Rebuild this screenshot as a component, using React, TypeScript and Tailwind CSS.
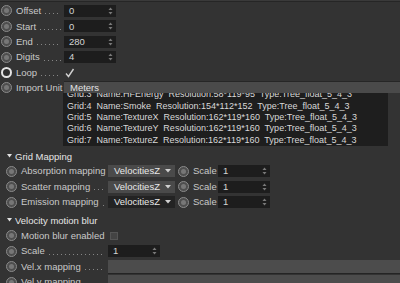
import React from 'react';

const font = { fontFamily: '"Liberation Sans", Arial, sans-serif' };

const gridLines = [
  'Grid:3  Name:HFEnergy  Resolution:58*119*95  Type:Tree_float_5_4_3',
  'Grid:4  Name:Smoke  Resolution:154*112*152  Type:Tree_float_5_4_3',
  'Grid:5  Name:TextureX  Resolution:162*119*160  Type:Tree_float_5_4_3',
  'Grid:6  Name:TextureY  Resolution:162*119*160  Type:Tree_float_5_4_3',
  'Grid:7  Name:TextureZ  Resolution:162*119*160  Type:Tree_float_5_4_3',
];

const Radio: React.FC<{ active?: boolean }> = ({ active }) =>
  active ? (
    <span className="w-[11px] h-[11px] shrink-0 rounded-full border-2 border-[#e4e4e4] bg-[#2e2e2e]" />
  ) : (
    <span className="w-[11px] h-[11px] shrink-0 rounded-full border border-[#8a8a8a] bg-[#4e4e4e] flex items-center justify-center">
      <span className="w-[5px] h-[5px] rounded-full bg-[#777777]" />
    </span>
  );

const Spinner = () => (
  <svg width="5" height="8" viewBox="0 0 5 8">
    <path d="M2.5 0.5 L4.5 3 L0.5 3 Z" fill="#7a7a7a" />
    <path d="M0.5 5 L4.5 5 L2.5 7.5 Z" fill="#7a7a7a" />
  </svg>
);

const NumberField: React.FC<{ value: string; width?: string }> = ({ value, width = 'w-[52px]' }) => (
  <div className={`${width} h-[12px] bg-[#1d1d1d] flex items-center justify-between pl-[5px] pr-[3px] text-[#d4d4d4]`}>
    <span>{value}</span>
    <Spinner />
  </div>
);

// dotted leader between label and its field
const Leader = () => (
  <span className="flex-1 h-[1px] mt-[6px] ml-[4px] mr-[3px] bg-[linear-gradient(to_right,#858585_1px,transparent_1px)] bg-[length:4px_1px] bg-repeat-x" />
);

const Label: React.FC<{ text: string; width: string; pad: string; active?: boolean; dots?: boolean }> = ({
  text,
  width,
  pad,
  active,
  dots = true,
}) => (
  <div className={`${width} ${pad} shrink-0 flex items-center`}>
    <Radio active={active} />
    <span className="ml-[4px] whitespace-nowrap text-[#c9c9c9]">{text}</span>
    {dots && <Leader />}
  </div>
);

const VelDropdown: React.FC<{ dark?: boolean }> = ({ dark }) => (
  <div
    className={`w-[67px] h-[12px] flex items-center justify-between pl-[6px] pr-[4px] text-[#e8e8e8] ${
      dark ? 'bg-[#232323]' : 'bg-[#4a4a4a]'
    }`}
  >
    <span>VelocitiesZ</span>
    <svg width="6" height="4" viewBox="0 0 6 4">
      <path d="M0 0 L6 0 L3 3.5 Z" fill="#d0d0d0" />
    </svg>
  </div>
);

const Header: React.FC<{ title: string; h: string }> = ({ title, h }) => (
  <div className={`${h} pt-[3px] flex items-center pl-[7px] text-[#e6e6e6]`}>
    <svg width="5" height="4" viewBox="0 0 5 4" className="mr-[3px]">
      <path d="M0 0 L5 0 L2.5 3.5 Z" fill="#e0e0e0" />
    </svg>
    <span>{title}</span>
  </div>
);

export default function App() {
  return (
    <div className="w-[400px] h-[283px] overflow-hidden bg-[#333333] text-[9.5px] leading-none" style={font}>
      <div className="h-[1px] bg-[#3a3a3a]" />
      <div className="h-[1px] bg-[#262626]" />
      <div className="pt-[1.3px]">
        {/* Top parameters */}
        {[
          ['Offset', '0'],
          ['Start', '0'],
          ['End', '280'],
          ['Digits', '4'],
        ].map(([label, value]) => (
          <div key={label} className="h-[15.4px] flex items-center">
            <Label text={label} width="w-[64px]" pad="pl-[1px]" />
            <NumberField value={value} />
          </div>
        ))}
        <div className="h-[15.4px] flex items-center">
          <Label text="Loop" width="w-[64px]" pad="pl-[1px]" active />
          <svg width="10" height="10" viewBox="0 0 10 10" className="ml-[1px]">
            <path d="M1 5.5 L3.5 8.5 L8.5 1" fill="none" stroke="#cfcfcf" strokeWidth="1.4" />
          </svg>
        </div>
        <div className="h-[13px] flex items-end">
          <div className="h-full flex items-center pt-[1px]">
            <Label text="Import Unit" width="w-[64px]" pad="pl-[1px]" dots={false} />
          </div>
          <div className="flex-1 h-[12px] bg-[#4a4a4a] border-t border-[#262626] flex items-center pl-[6px] text-[#e2e2e2]">
            Meters
          </div>
        </div>

        {/* Grid list */}
        <div className="ml-[63px] w-[325px] h-[53px] bg-[#1e1e1e] overflow-hidden">
          <div className="mt-[-4px] pl-[4px] text-[9px] leading-[11.4px] text-[#d8d8d8]">
            {gridLines.map((line) => (
              <div key={line} className="whitespace-pre">
                {line}
              </div>
            ))}
          </div>
        </div>

        {/* Grid Mapping */}
        <Header title="Grid Mapping" h="h-[17px]" />
        {[
          ['Absorption mapping', false, false],
          ['Scatter mapping', true, false],
          ['Emission mapping', true, true],
        ].map(([label, dots, dark]) => (
          <div key={label as string} className="h-[15.5px] flex items-center">
            <Label text={label as string} width="w-[108px]" pad="pl-[6px]" dots={dots as boolean} />
            <VelDropdown dark={dark as boolean} />
            <div className="ml-[3px] flex items-center">
              <Radio />
              <span className="ml-[4px] w-[25px] text-[#c9c9c9]">Scale</span>
            </div>
            <NumberField value="1" />
          </div>
        ))}

        {/* Velocity motion blur */}
        <Header title="Velocity motion blur" h="h-[18px]" />
        <div className="h-[15.5px] flex items-center">
          <Label text="Motion blur enabled" width="w-[110px]" pad="pl-[6px]" dots={false} />
          <span className="w-[8px] h-[8px] bg-[#444444] border border-[#555555]" />
        </div>
        <div className="h-[15.5px] flex items-center">
          <Label text="Scale" width="w-[108px]" pad="pl-[6px]" />
          <NumberField value="1" />
        </div>
        {['Vel.x mapping', 'Vel.y mapping'].map((label) => (
          <div key={label} className="h-[15.5px] flex items-center">
            <Label text={label} width="w-[108px]" pad="pl-[6px]" />
            <div className="flex-1 h-[14px] bg-[#4c4c4c] border-b border-[#242424]" />
          </div>
        ))}
      </div>
    </div>
  );
}
